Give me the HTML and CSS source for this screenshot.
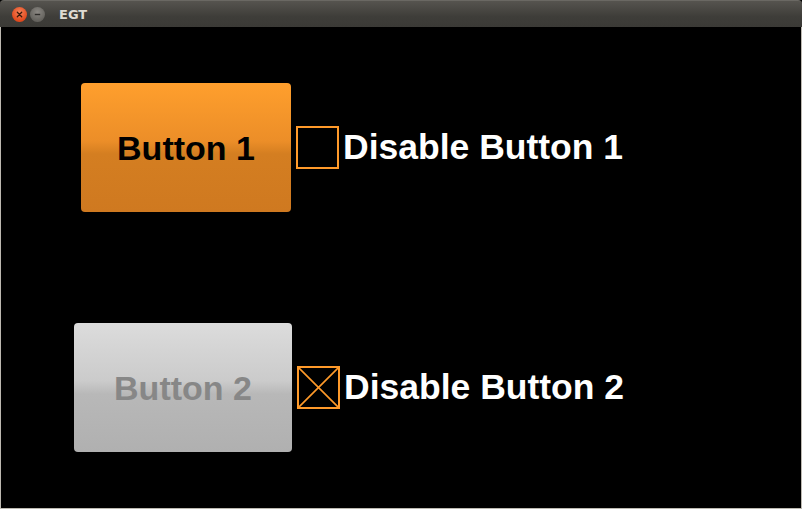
FILE: index.html
```html
<!DOCTYPE html>
<html>
<head>
<meta charset="utf-8">
<link rel="stylesheet" href="styles.css">
</head>
<body>
<div class="window">
  <div class="titlebar">
    <span class="wbtn close"><svg width="15" height="15" viewBox="0 0 15 15"><path d="M5.3 5.3 L9.7 9.7 M9.7 5.3 L5.3 9.7" stroke="#3a1a0a" stroke-width="1.3" stroke-linecap="round"/></svg></span>
    <span class="wbtn min"><svg width="15" height="15" viewBox="0 0 15 15"><path d="M4.8 7.5 H10.2" stroke="#2e2d2a" stroke-width="1.4"/></svg></span>
    <span class="title">EGT</span>
  </div>
  <div class="content">
    <div class="row row1">
      <div class="btn btn-on">Button 1</div>
      <div class="check"></div>
      <div class="label">Disable Button 1</div>
    </div>
    <div class="row row2">
      <div class="btn btn-off">Button 2</div>
      <div class="check checked"><svg width="39" height="39" viewBox="0 0 39 39"><path d="M0 0 L39 39 M39 0 L0 39" stroke="#ff9a2a" stroke-width="1.6"/></svg></div>
      <div class="label">Disable Button 2</div>
    </div>
  </div>
</div>
</body>
</html>
```

FILE: styles.css
```css
html, body {
  margin: 0;
  padding: 0;
  background: #000;
}
.window {
  width: 802px;
  height: 509px;
  display: flex;
  flex-direction: column;
  box-sizing: border-box;
}
.titlebar {
  height: 27px;
  flex: none;
  background: linear-gradient(#56544f, #3e3d39 60%, #3b3a36);
  border-top: 1px solid #6a6863;
  box-sizing: border-box;
  display: flex;
  align-items: center;
  padding-left: 12px;
  border-radius: 4px 4px 0 0;
}
.wbtn {
  width: 15px;
  height: 15px;
  border-radius: 50%;
  display: flex;
  margin-right: 3px;
}
.close {
  background: radial-gradient(circle at 50% 35%, #f7835a, #e0481c 70%);
}
.min {
  background: radial-gradient(circle at 50% 35%, #8b8883, #64625d 70%);
}
.title {
  font-family: "DejaVu Sans", sans-serif;
  font-weight: bold;
  font-size: 13px;
  color: #dfdbd2;
  margin-left: 11px;
}
.content {
  flex: 1;
  background: #000;
  border: 1px solid #bdb9b1;
  border-top: none;
  padding-top: 56px;
  display: flex;
  flex-direction: column;
  gap: 111px;
}
.row {
  display: flex;
  align-items: center;
  height: 129px;
}
.row1 { padding-left: 80px; }
.row2 { padding-left: 73px; }
.btn {
  height: 129px;
  border-radius: 4px;
  display: flex;
  align-items: center;
  justify-content: center;
  font-family: "Liberation Sans", Arial, sans-serif;
  font-weight: bold;
  font-size: 34px;
  box-sizing: border-box;
  padding-top: 1px;
}
.btn-on {
  width: 210px;
  background: linear-gradient(#ff9f2d, #ec8e28 45%, #d47e21 55%, #cf7920);
  color: #000;
}
.btn-off {
  width: 218px;
  background: linear-gradient(#dcdcdc, #cbcbcb 45%, #b8b8b8 55%, #b0b0b0);
  color: #878787;
}
.check {
  width: 43px;
  height: 43px;
  box-sizing: border-box;
  border: 2px solid #ff9a2a;
  margin-left: 5px;
  display: flex;
}
.label {
  font-family: "Liberation Sans", Arial, sans-serif;
  font-weight: bold;
  font-size: 35.5px;
  color: #fff;
  margin-left: 4px;
}
```
